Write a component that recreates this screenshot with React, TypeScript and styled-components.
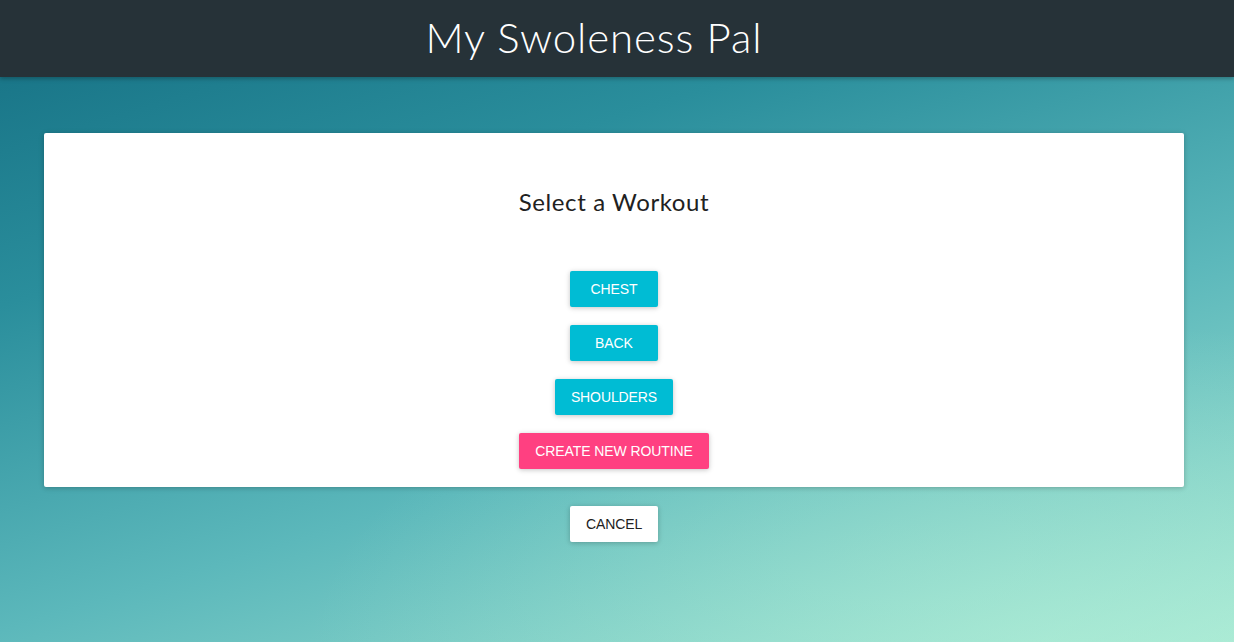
import React from "react";
import styled, { createGlobalStyle } from "styled-components";

const Global = createGlobalStyle`
  html, body { margin: 0; padding: 0; height: 100%; }
  body { font-family: "Liberation Sans", Arial, sans-serif; }
  #root { min-height: 100vh; }
`;

const Page = styled.div`
  min-height: 100vh;
  display: flex;
  flex-direction: column;
  background:
    radial-gradient(ellipse 60% 50% at 85% 100%, rgba(180, 240, 215, 0.5), rgba(180, 240, 215, 0) 100%),
    linear-gradient(163deg, #146e82 0%, #2a8e9c 30%, #5cb8bb 62%, #a6e8d4 100%);
`;

const Header = styled.header`
  height: 77px;
  background: #263238;
  display: flex;
  align-items: center;
  justify-content: center;
  padding-right: 46px;
  box-shadow: 0 2px 4px rgba(0, 0, 0, 0.25);
`;

const Title = styled.h1`
  margin: 0;
  color: #ffffff;
  font-family: Lato, "Open Sans", sans-serif;
  font-weight: 300;
  font-size: 42px;
  letter-spacing: 0.9px;
  line-height: 1;
  padding-bottom: 4px;
`;

const Main = styled.main`
  padding: 56px 50px 0 44px;
  display: flex;
  flex-direction: column;
  align-items: center;
`;

const Card = styled.section`
  width: 1140px;
  box-sizing: border-box;
  background: #ffffff;
  border-radius: 2px;
  box-shadow: 0 1px 6px rgba(0, 0, 0, 0.12), 0 1px 4px rgba(0, 0, 0, 0.12);
  padding: 55px 0 18px;
  display: flex;
  flex-direction: column;
  align-items: center;
`;

const Heading = styled.h2`
  margin: 0 0 55px;
  font-family: Lato, "Open Sans", sans-serif;
  font-weight: 400;
  font-size: 24px;
  line-height: 28px;
  letter-spacing: 0.6px;
  color: #212121;
`;

const ButtonList = styled.div`
  display: flex;
  flex-direction: column;
  align-items: center;
  gap: 18px;
`;

const Button = styled.button<{ $variant: "primary" | "accent" | "plain" }>`
  height: 36px;
  min-width: 88px;
  padding: 0 16px;
  border: none;
  border-radius: 2px;
  font-family: "Liberation Sans", Arial, sans-serif;
  font-size: 14px;
  text-transform: uppercase;
  letter-spacing: -0.1px;
  cursor: pointer;
  box-shadow: 0 1px 6px rgba(0, 0, 0, 0.12), 0 1px 4px rgba(0, 0, 0, 0.12);
  background: ${(p) =>
    p.$variant === "primary" ? "#00bcd4" : p.$variant === "accent" ? "#ff4081" : "#ffffff"};
  color: ${(p) => (p.$variant === "plain" ? "#212121" : "#ffffff")};
`;

const Footer = styled.div`
  margin-top: 19px;
  display: flex;
  justify-content: center;
`;

export default function App() {
  return (
    <Page>
      <Global />
      <Header>
        <Title>My Swoleness Pal</Title>
      </Header>
      <Main>
        <Card>
          <Heading>Select a Workout</Heading>
          <ButtonList>
            <Button $variant="primary">Chest</Button>
            <Button $variant="primary">Back</Button>
            <Button $variant="primary">Shoulders</Button>
            <Button $variant="accent">Create New Routine</Button>
          </ButtonList>
        </Card>
        <Footer>
          <Button $variant="plain">Cancel</Button>
        </Footer>
      </Main>
    </Page>
  );
}
